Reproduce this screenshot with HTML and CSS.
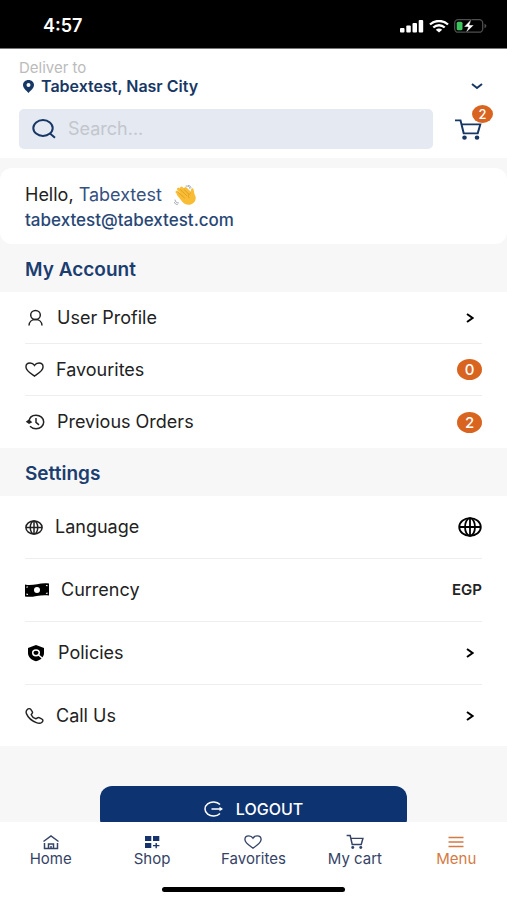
FILE: index.html
```html
<!DOCTYPE html>
<html lang="en">
<head>
<meta charset="utf-8">
<meta name="viewport" content="width=device-width, initial-scale=1">
<title>Menu</title>
<link rel="stylesheet" href="styles.css">
</head>
<body>
<svg class="sprite" aria-hidden="true">
  <symbol id="heart" viewBox="0 0 20 16" preserveAspectRatio="none"><path d="M10 15C7 12.8 1 9.3 1 5.2 1 2.6 3 1 5.3 1 7.4 1 9 2 10 3.6 11 2 12.6 1 14.7 1 17 1 19 2.6 19 5.2 19 9.3 13 12.8 10 15Z"/></symbol>
  <symbol id="cart" viewBox="0 0 28 24" preserveAspectRatio="none"><path d="M1 2.5h5.5l3.2 14.2h14L26.300 7H8"/><circle class="dot" cx="10.500" cy="21.500" r="2.300"/><circle class="dot" cx="23" cy="21.500" r="2.300"/></symbol>
  <symbol id="globe" viewBox="0 0 24 20" preserveAspectRatio="none"><ellipse cx="12" cy="10" rx="10.800" ry="8.800"/><ellipse cx="12" cy="10" rx="5" ry="8.800"/><path d="M1.200 10h21.600M12 1.200v17.600"/></symbol>
  <symbol id="chevron" viewBox="0 0 8 10"><path d="M1 1l5.500 4L1 9"/></symbol>
</svg>

<div class="status">
  <span class="time">4:57</span>
  <div class="signals">
    <svg width="24" height="13" viewBox="0 0 24 13" fill="#fff"><rect y="8" width="4.500" height="4.500" rx="1"/><rect x="6.300" y="5.500" width="4.500" height="7" rx="1"/><rect x="12.500" y="3" width="4.500" height="9.500" rx="1"/><rect x="18.700" width="4.500" height="12.500" rx="1"/></svg>
    <svg width="20" height="13" viewBox="0 0 20 13" fill="none" stroke="#fff" stroke-width="2.300"><path d="M1 4.500C6-.2 14-.2 19 4.500M4.300 7.500c3.300-3 8.100-3 11.400 0"/><path fill="#fff" stroke="none" d="M6.800 9.700c1.900-1.600 4.500-1.600 6.400 0L10 12.500z"/></svg>
    <svg width="33" height="14" viewBox="0 0 33 14"><rect x=".7" y=".7" width="28" height="12.500" rx="3.500" fill="none" stroke="#4d504e" stroke-width="1.300"/><rect x="2.700" y="2.700" width="5.800" height="8.600" rx="1.500" fill="#3ec45c"/><path d="M30.500 4.800v4.400c2.500-1 2.500-3.400 0-4.400z" fill="#4d504e"/><path d="M17.500 0L9.800 8h4.400l-2.500 6L20 6h-4.500z" fill="#fff" stroke="#000" stroke-width=".5"/></svg>
  </div>
</div>

<header class="header">
  <span class="deliver">Deliver to</span>
  <button class="place" type="button">
    <svg width="11" height="13" viewBox="0 0 11 13"><path fill="currentColor" fill-rule="evenodd" d="M5.500 0C2.300 0 0 2.200 0 5c0 3 3.200 5.500 5.500 8C7.800 10.500 11 8 11 5c0-2.800-2.300-5-5.500-5zm0 3a2 2 0 110 4 2 2 0 010-4z"/></svg>
    <span>Tabextest, Nasr City</span>
    <svg class="line down" width="12" height="7" viewBox="0 0 12 7"><path d="M1 1l5 4 5-4"/></svg>
  </button>
  <div class="tools">
    <label class="search">
      <svg class="line" width="24" height="20" viewBox="0 0 24 20"><ellipse cx="11" cy="9" rx="9.700" ry="7.900"/><path d="M18 14.600l5 4.200"/></svg>
      <input type="search" placeholder="Search..." aria-label="Search">
    </label>
    <a class="basket" href="#cart" aria-label="Cart, 2 items">
      <svg class="line" width="28" height="22"><use href="#cart"/></svg>
      <span class="badge small">2</span>
    </a>
  </div>
</header>

<main class="content">
  <section class="hello">
    <p class="greeting"><span>Hello, <span class="name">Tabextest</span></span>
      <svg width="23" height="21" viewBox="0 0 23 21"><g stroke="#f8bd35" stroke-width="3" stroke-linecap="round"><path d="M3 7l8 8M4.500 4l8 8M7.500 3l8 8M11.500 3.500l6 6"/></g><path fill="#f8bd35" d="M2.500 9.500L14 5l2.500 3c.5-2.500.2-4.500 1.800-4.700 2-.2 1.300 4.700 3 7.700 1.500 3.500-1 8-5.500 8.700-3.300.5-5.600-1-7.500-3z"/><path d="M4.500 7.500l6 5.500M6.500 4.800l6.500 6M10 4.500l5 4.800M16.500 8c-2 1-2.700 3-1.500 5" fill="none" stroke="#dd9420" stroke-width=".7" stroke-linecap="round"/><path d="M12 1c2-.3 3.500.7 4 2.500M14.500.5c1.500.2 2.300 1 2.500 2M1 15c.2 1.800 1.500 3 3.500 3M.5 17.500c.4 1.300 1.300 2 2.800 2" fill="none" stroke="#8b929b" stroke-width=".8" stroke-linecap="round"/></svg>
    </p>
    <p class="email">tabextest@tabextest.com</p>
  </section>

  <h2 class="title">My Account</h2>
  <ul class="list">
    <li><a class="row" href="#profile">
      <svg class="line icon" viewBox="0 0 20 18"><ellipse cx="10.500" cy="6" rx="4.800" ry="4.500"/><path d="M4 16.500c0-3.500 2.700-6 6.500-6s6.500 2.500 6.500 6"/></svg>
      <span class="label">User Profile</span>
      <svg class="line go"><use href="#chevron"/></svg></a></li>
    <li><a class="row" href="#favourites">
      <svg class="line icon heart"><use href="#heart"/></svg>
      <span class="label">Favourites</span>
      <span class="badge">0</span></a></li>
    <li><a class="row" href="#orders">
      <svg class="line icon" viewBox="0 0 20 18"><path d="M4 8.500C4.300 4.500 7.200 2.200 11 2.200c4.300 0 7.700 3 7.700 6.800s-3.400 6.800-7.700 6.800c-2.500 0-4.500-1-6-2.500M11 5v4.300l3 2.500"/><path class="dot" d="M.8 8.700L4 6.300l3.300 2.900L4 11z"/></svg>
      <span class="label">Previous Orders</span>
      <span class="badge">2</span></a></li>
  </ul>

  <h2 class="title">Settings</h2>
  <ul class="list tall">
    <li><button class="row" type="button">
      <svg class="line icon globe"><use href="#globe"/></svg>
      <span class="label">Language</span>
      <svg class="line world"><use href="#globe"/></svg></button></li>
    <li><button class="row" type="button">
      <svg class="icon note" viewBox="0 0 24 14"><path d="M0 1.500c8 2 15-2.500 24-1V12.500c-9-1.500-16 2.500-24 1z"/><ellipse cx="12" cy="7" rx="3" ry="3" fill="#fff"/><path d="M1.500 3.500v1.400c1 0 1.500-.6 1.700-1.300zM1.500 12v-1.500c1 0 1.500.7 1.700 1.600zM22.500 1.900v1.400c-.9 0-1.500-.6-1.700-1.400zM22.500 10.900V9.400c-.9 0-1.500.6-1.700 1.400z" fill="#fff"/></svg>
      <span class="label">Currency</span>
      <span class="code">EGP</span></button></li>
    <li><a class="row" href="#policies">
      <svg class="icon shield" viewBox="0 0 20 18"><path d="M10.500 1l8 3v5c0 4-3.300 7-8 8.300C5.800 16 2.500 13 2.500 9V4z"/><g fill="none" stroke="#fff" stroke-width="1.500"><ellipse cx="10.500" cy="8.800" rx="3.300" ry="2.900"/><path d="M13 11l4.500 3.800"/></g></svg>
      <span class="label">Policies</span>
      <svg class="line go"><use href="#chevron"/></svg></a></li>
    <li><a class="row" href="#call">
      <svg class="line icon phone" viewBox="0 0 20 18"><path d="M2.200 2.300C3.500 1 5.300.8 6.100 2l1.700 2.600c.8 1.200-1 2-1.300 3 .8 2 2.600 3.500 5 4.300 1.100-.2 2-1.800 3.400-1.200l3 1.600c1.400.7 1.200 2.300-.3 3.500-1.300 1-3.500.9-5.700.1C7 14 3.200 10.600 1.500 6.500 1 5 1 3.500 2.200 2.300z"/></svg>
      <span class="label">Call Us</span>
      <svg class="line go"><use href="#chevron"/></svg></a></li>
  </ul>

  <button class="logout" type="button">
    <svg class="line" width="20" height="16" viewBox="0 0 20 16"><path d="M16 3.500A8.500 7 0 1016 12.500M7.500 8h10"/><path class="dot" d="M15.500 5.800L19 8l-3.500 2.200z"/></svg>
    <span>LOGOUT</span>
  </button>
</main>

<footer class="footer">
  <nav class="tabs">
    <a href="#home"><svg class="line" viewBox="0 0 18 16"><path d="M1.500 7.500L9 2l7.500 5.500M2.500 9v5.500h13V9M6.500 14.500V10h5v4.500M9 12v2.500"/></svg>Home</a>
    <a href="#shop"><svg viewBox="0 0 18 16"><path d="M2 2h6.300v5H2zM10 2h6.300v5H10zM2 9h6.300v5H2zM12.500 9h1.400v2h2.500v1.300h-2.500v2h-1.400v-2H10V11h2.500z"/></svg>Shop</a>
    <a href="#favorites"><svg class="line" viewBox="0 0 18 16"><use href="#heart" y="1" width="18" height="14"/></svg>Favorites</a>
    <a href="#cart"><svg class="line trolley"><use href="#cart"/></svg>My cart</a>
    <a class="active" href="#menu" aria-current="page"><svg class="line" viewBox="0 0 18 16"><path d="M1.500 3.500h15M1.500 8h15M1.500 12.500h15"/></svg>Menu</a>
  </nav>
  <div class="handle"></div>
</footer>
</body>
</html>
```

FILE: styles.css
```css
* {
  box-sizing: border-box;
}

body {
  margin: 0;
  height: 100vh;
  display: flex;
  flex-direction: column;
  background: #f7f7f7;
  color: #222;
  font-family: Inter, "Liberation Sans", sans-serif;
  font-size: 18px;
  line-height: 24px;
}

button,
input {
  font: inherit;
  color: inherit;
  border: 0;
  padding: 0;
  background: none;
}

a {
  color: inherit;
  text-decoration: none;
}

svg {
  flex: none;
}

.sprite {
  display: none;
}

.line {
  fill: none;
  stroke: currentColor;
  stroke-width: 1.5;
}

.dot {
  fill: currentColor;
  stroke: none;
}

.status {
  flex: none;
  height: 49px;
  padding: 4px 20px 0 43px;
  display: flex;
  align-items: center;
  justify-content: space-between;
  background: #000;
  border-bottom: 1px solid #777;
  color: #fff;
}

.time {
  font-weight: 600;
}

.signals {
  display: flex;
  align-items: center;
  gap: 5px;
}

.header {
  flex: none;
  padding: 10px 19px 9px;
  background: #fff;
  color: #173764;
}

.deliver {
  display: block;
  font-size: 15px;
  line-height: 18px;
  color: #bbb;
}

.place {
  display: flex;
  align-items: center;
  gap: 7px;
  width: 100%;
  padding: 0 5px 0 4px;
  font-size: 16px;
  font-weight: 600;
  line-height: 18px;
}

.down {
  margin-left: auto;
  stroke-width: 2;
}

.tools {
  display: flex;
  align-items: center;
  gap: 21px;
  margin-top: 14px;
}

.search {
  flex: 1;
  display: flex;
  align-items: center;
  gap: 12px;
  height: 40px;
  padding: 0 13px;
  border-radius: 5px;
  background: #e4e9f2;
}

.search svg {
  stroke-width: 2;
}

.search input {
  flex: 1;
  min-width: 0;
  outline: 0;
}

.search input::placeholder {
  color: #c3c6cc;
  opacity: 1;
}

.basket {
  position: relative;
  display: flex;
  width: 34px;
}

.basket svg {
  stroke-width: 2;
}

.badge {
  width: 25px;
  height: 21px;
  border-radius: 50%;
  background: #d96420;
  color: #fff;
  font-size: 15px;
  font-weight: 500;
  line-height: 21px;
  text-align: center;
}

.small {
  position: absolute;
  top: -13px;
  right: -5px;
  width: 21px;
  height: 18px;
  font-size: 13px;
  line-height: 18px;
}

.content {
  flex: 1;
  min-height: 0;
  overflow-y: auto;
  scrollbar-width: none;
  padding-top: 10px;
}

.hello {
  padding: 14px 25px 12px;
  border-radius: 12px;
  background: #fff;
}

.hello p {
  margin: 0;
}

.greeting {
  display: flex;
  align-items: center;
  gap: 12px;
  line-height: 26px;
}

.name {
  color: #35517f;
}

.email {
  font-size: 17px;
  font-weight: 500;
  color: #294775;
}

.title {
  margin: 0;
  padding: 4px 25px 0;
  font-size: 19px;
  font-weight: 600;
  line-height: 44px;
  color: #1b3d70;
}

.list {
  margin: 0;
  padding: 0 25px;
  list-style: none;
  background: #fff;
}

.row {
  display: flex;
  align-items: center;
  gap: 12px;
  width: 100%;
  height: 52px;
  text-align: left;
  border-bottom: 1px solid #eee;
}

.tall .row {
  height: 63px;
}

.list li:last-child .row {
  border-bottom: 0;
}

.tall li:last-child .row {
  height: 61px;
}

.label {
  flex: 1;
}

.icon {
  width: 20px;
  height: 18px;
}

.heart {
  width: 19px;
  height: 15px;
}

.globe {
  width: 18px;
  height: 15px;
  stroke-width: 2;
}

.note {
  width: 24px;
  height: 14px;
}

.shield {
  width: 21px;
}

.phone {
  width: 19px;
}

.go {
  width: 8px;
  height: 10px;
  margin-right: 8px;
  color: #000;
  stroke-width: 2;
}

.world {
  width: 24px;
  height: 20px;
  color: #000;
  stroke-width: 1.8;
}

.code {
  font-size: 15px;
  font-weight: 600;
}

.logout {
  display: flex;
  align-items: center;
  justify-content: center;
  gap: 12px;
  width: 60.4%;
  height: 45px;
  margin: 40px auto;
  border-radius: 12px;
  background: #0e3371;
  color: #fff;
  font-size: 16px;
  font-weight: 500;
}

.footer {
  flex: none;
  padding: 12px 0 8px;
  background: #fff;
}

.tabs {
  display: grid;
  grid-template-columns: repeat(5, 1fr);
  color: #354366;
  font-size: 15px;
  line-height: 18px;
}

.tabs a {
  display: flex;
  flex-direction: column;
  align-items: center;
}

.tabs svg {
  width: 18px;
  height: 16px;
  fill: #17336d;
}

.tabs .line {
  fill: none;
}

.tabs .trolley {
  height: 15px;
  margin-bottom: 1px;
  stroke-width: 2.3;
}

.tabs .active {
  color: #d47a43;
}

.handle {
  width: 36%;
  height: 5px;
  margin: 19px auto 0;
  border-radius: 3px;
  background: #000;
}
```
